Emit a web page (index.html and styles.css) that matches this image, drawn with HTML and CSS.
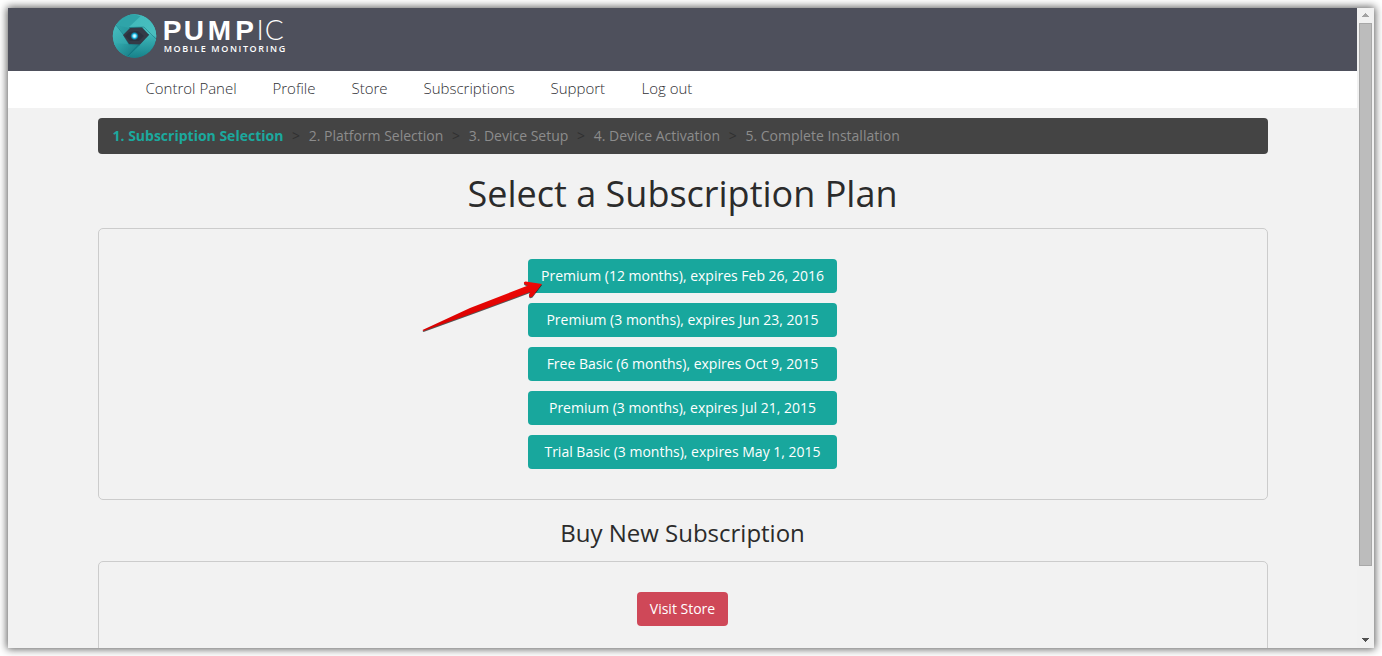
FILE: index.html
```html
<!DOCTYPE html>
<html lang="en">
<head>
<meta charset="utf-8">
<title>Pumpic - Select a Subscription Plan</title>
<link rel="stylesheet" href="styles.css">
</head>
<body>
<div class="window">
  <div class="page">
    <header class="header">
      <svg class="logo" width="190" height="50" viewBox="0 0 190 50" role="img" aria-label="Pumpic Mobile Monitoring">
        <defs>
          <linearGradient id="top" x1="0" y1="0" x2="1" y2="1"><stop offset="0" stop-color="#3fb9bb"/><stop offset="1" stop-color="#4cc0c0"/></linearGradient>
          <linearGradient id="right" x1="0" y1="0" x2="0" y2="1"><stop offset="0" stop-color="#3fb8bb"/><stop offset="1" stop-color="#157f88"/></linearGradient>
          <linearGradient id="left" x1="0" y1="0" x2="0.6" y2="1"><stop offset="0" stop-color="#48bfc1"/><stop offset="1" stop-color="#23949b"/></linearGradient>
          <linearGradient id="bottom" x1="0" y1="0" x2="1" y2="0.6"><stop offset="0" stop-color="#35b0b3"/><stop offset="1" stop-color="#167781"/></linearGradient>
          <radialGradient id="glow"><stop offset="0" stop-color="#fff"/><stop offset=".35" stop-color="#8be9ff"/><stop offset=".6" stop-color="#12a9d5"/><stop offset="1" stop-color="#0c84a9" stop-opacity="0"/></radialGradient>
          <clipPath id="disc"><circle cx="23.5" cy="24" r="21.7"/></clipPath>
        </defs>
        <g clip-path="url(#disc)">
          <rect x="1" y="1" width="45" height="46" fill="url(#bottom)"/>
          <path d="M5 13 L20 1 H46 V27 L33 15Z" fill="url(#top)"/>
          <path d="M5 13 L19 1 L32 5 L18 16Z" fill="#2fa4a9"/>
          <path d="M18 15 L33 1 H46 V30 L38 23 L31 15Z" fill="url(#top)"/>
          <path d="M46 25 L38 22 L28 32 L13 47 H46Z" fill="url(#right)"/>
          <path d="M5 12 L13 23 L18 32 L29 33 L14 48 L1 43 V17Z" fill="url(#left)"/>
          <path d="M1 31 L17 32 L29 33 L15 47 L5 43Z" fill="url(#bottom)"/>
          <path d="M18 15.5 L33 15 L46 28" fill="none" stroke="#1b7780" stroke-width=".8" opacity=".7"/>
          <path d="M5 13 L12 22 L18 32.5 L29 33" fill="none" stroke="#157984" stroke-width=".8" opacity=".8"/>
          <path d="M14 47 L38 22" fill="none" stroke="#0d7580" stroke-width="1"/>
          <path d="M12 23 L19 16 L31 15.5 L38 23 L29 32.5 L18 32Z" fill="#343a47"/>
          <path d="M14 24 L18 20 L27 19 L33 24 L28 29 L19 29Z" fill="#2b313e"/>
        </g>
        <circle cx="23.5" cy="24" r="4.3" fill="url(#glow)"/>
        <text class="logo-bold" x="51.8 72.7 96.8 124.3" y="28">PUMP</text>
        <text class="logo-light" x="145.5 153.7" y="28">IC</text>
        <text class="logo-sub" x="52.7" y="40" textLength="121.5" lengthAdjust="spacing">MOBILE MONITORING</text>
      </svg>
    </header>
    <nav class="nav">
      <a class="n1">Control Panel</a><a class="n2">Profile</a><a class="n3">Store</a><a class="n4">Subscriptions</a><a class="n5">Support</a><a class="n6">Log out</a>
    </nav>
    <main class="container">
      <ol class="breadcrumb">
        <li class="active">1. Subscription Selection</li><li>2. Platform Selection</li><li>3. Device Setup</li><li>4. Device Activation</li><li>5. Complete Installation</li>
      </ol>
      <h1>Select a Subscription Plan</h1>
      <section class="panel plans">
        <a class="btn">Premium (12 months), expires Feb 26, 2016</a>
        <a class="btn">Premium (3 months), expires Jun 23, 2015</a>
        <a class="btn">Free Basic (6 months), expires Oct 9, 2015</a>
        <a class="btn">Premium (3 months), expires Jul 21, 2015</a>
        <a class="btn">Trial Basic (3 months), expires May 1, 2015</a>
      </section>
      <h2>Buy New Subscription</h2>
      <section class="panel store">
        <a class="btn danger">Visit Store</a>
      </section>
    </main>
  </div>
  <div class="scrollbar">
    <svg class="up" width="17" height="15"><path d="M5 9h7v-1h-1v-1h-1v-1h-1v-1h-1v1h-1v1h-1v1h-1z" fill="#a3a3a3" shape-rendering="crispEdges"/></svg>
    <div class="thumb"></div>
    <svg class="down" width="17" height="17"><path d="M5 7h7v1h-1v1h-1v1h-1v1h-1v-1h-1v-1h-1v-1h-1z" fill="#505050" shape-rendering="crispEdges"/></svg>
  </div>
</div>
<svg class="arrow" width="130" height="60" viewBox="0 0 130 60">
  <defs><linearGradient id="red" x1="0" y1="0" x2=".3" y2="1"><stop offset="0" stop-color="#f80c08"/><stop offset="1" stop-color="#d40000"/></linearGradient></defs>
  <path class="arrow-shape" d="M2.5 49 L50 27 L108 4.5 L105 3.5 Q102.5 1 105.5 .5 L122 3 L112.5 15.5 Q109 17.5 109 14 L110 11 L56 31 L3.5 50 Z" fill="url(#red)"/>
</svg>
</body>
</html>
```
FILE: styles.css
```css
* { box-sizing: border-box; }
body {
  margin: 0;
  padding: 8px;
  height: 656px;
  overflow: hidden;
  background: #fff;
  color: #2b2b2b;
  font: 14px/20px "Open Sans", sans-serif;
}
.window {
  display: flex;
  width: 1366px;
  height: 640px;
  background: #f2f2f2;
  box-shadow: 0 0 8px 1px rgba(0, 0, 0, .65);
}
.page { width: 1349px; height: 640px; overflow: hidden; }
.header { height: 63px; padding: 4px 0 0 103px; background: #4e505c; }
.logo { display: block; overflow: visible; }
.logo text { fill: #fff; }
.logo-bold { font: bold 28px "Liberation Sans", sans-serif; }
.logo-light { font: 300 28px Lato, "Open Sans", sans-serif; }
.logo-sub { font: 600 9px "Open Sans", sans-serif; }
.nav {
  display: flex;
  gap: 36px;
  height: 37px;
  padding: 7px 0 0 137.5px;
  background: #fff;
  color: #2f2f35;
  font-size: 15px;
  font-weight: 300;
  line-height: 21px;
  white-space: nowrap;
}
.n1 { width: 91px; }
.n2 { width: 43px; }
.n3 { width: 36px; }
.n4 { width: 91px; }
.n5 { width: 55px; }
.container { width: 1170px; margin: 0 auto 0 90px; }
.breadcrumb {
  display: flex;
  height: 36px;
  margin: 10px 0 0;
  padding: 8px 14.5px;
  border-radius: 4px;
  background: #444;
  color: #8c8c8c;
  list-style: none;
  white-space: nowrap;
}
.breadcrumb .active { color: #1ba99e; font-weight: 700; }
.breadcrumb li + li::before {
  content: ">";
  display: inline-block;
  width: 25.3px;
  text-align: center;
  color: #303030;
}
h1, h2 { font-weight: 400; text-align: center; margin: 0; padding-right: 1px; }
h1 { margin-top: 20px; font-size: 36px; line-height: 40px; }
h2 { margin-top: 19px; font-size: 24px; line-height: 27px; }
.panel {
  display: flex;
  flex-direction: column;
  align-items: center;
  gap: 10px;
  border: 1px solid #ccc;
  border-radius: 5px;
  padding: 30px 1px 0 0;
}
.plans { height: 272px; margin-top: 14px; }
.store { height: 140px; margin-top: 15px; }
.btn {
  width: 309px;
  height: 34px;
  border-radius: 4px;
  background: #18a79d;
  color: #fff;
  line-height: 34px;
  text-align: center;
  white-space: nowrap;
}
.danger { width: 91px; background: #cf4858; }
.scrollbar { width: 17px; background: #f1f1f1; }
.scrollbar svg { display: block; }
.thumb {
  width: 13px;
  height: 543px;
  margin-left: 2px;
  border: 1px solid #a8a8a8;
  background: #bcbcbc;
}
.down { margin-top: 65px; }
.arrow { position: absolute; left: 420px; top: 281px; }
.arrow-shape { filter: drop-shadow(0 1px .7px rgba(0, 0, 0, .65)); }
```
